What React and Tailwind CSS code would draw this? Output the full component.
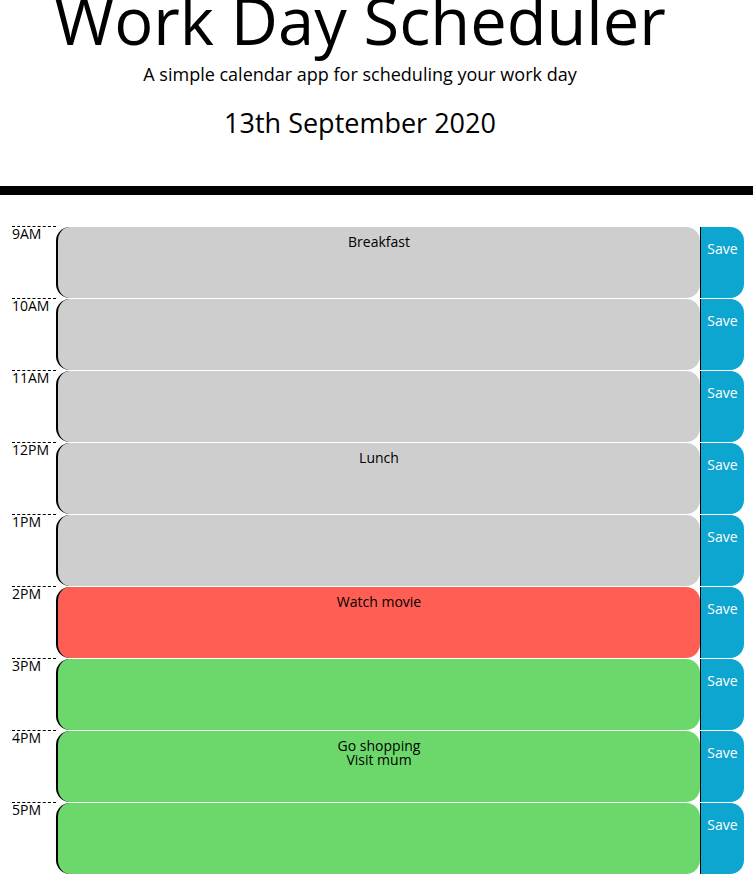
import React from 'react';

const hours = [
    { label: '9AM', text: 'Breakfast', state: 'past' },
    { label: '10AM', text: '', state: 'past' },
    { label: '11AM', text: '', state: 'past' },
    { label: '12PM', text: 'Lunch', state: 'past' },
    { label: '1PM', text: '', state: 'past' },
    { label: '2PM', text: 'Watch movie', state: 'present' },
    { label: '3PM', text: '', state: 'future' },
    { label: '4PM', text: 'Go shopping\nVisit mum', state: 'future' },
    { label: '5PM', text: '', state: 'future' },
];

const stateClass = {
    past: 'bg-[#cecece]',
    present: 'bg-[#ff5e55]',
    future: 'bg-[#6cd86c]',
};

const TimeBlock = ({ label, text, state }) => (
    <div className="grid grid-cols-[44px_1fr_44px] h-[72px]">
        <div className="border-t border-dashed border-black text-[14px] leading-[12px] pt-[1px]">
            {label}
        </div>
        <div
            className={`mt-[1px] rounded-[14px] border-l-2 border-black pt-[8px] px-[10px] text-center text-[14px] leading-[13.5px] text-black whitespace-pre-line ${stateClass[state]}`}
        >
            {text}
        </div>
        <button
            type="button"
            className="mt-[1px] w-[44px] flex justify-center items-start pt-[15px] border-l border-black rounded-r-[14px] bg-[#0ca6d1] text-white text-[14px] leading-[14px]"
        >
            Save
        </button>
    </div>
);

const App = () => {
    return (
        <div className="min-h-screen bg-white text-black overflow-hidden" style={{ fontFamily: '"Open Sans", "Noto Sans", sans-serif' }}>
            <header className="w-[720px] text-center">
                <h1 className="mt-[-19px] text-[65px] leading-[1.2] font-normal">Work Day Scheduler</h1>
                <p className="mt-[2px] text-[18px] leading-[1.5]">A simple calendar app for scheduling your work day</p>
                <p className="mt-[19px] text-[27px] leading-[1.2]">13th September 2020</p>
            </header>
            <div className="mt-[47px] h-[9px] bg-black" />
            <div className="mt-[31px] ml-[12px] w-[732px]">
                {hours.map((h) => (
                    <TimeBlock key={h.label} {...h} />
                ))}
            </div>
        </div>
    );
};

export default App;
